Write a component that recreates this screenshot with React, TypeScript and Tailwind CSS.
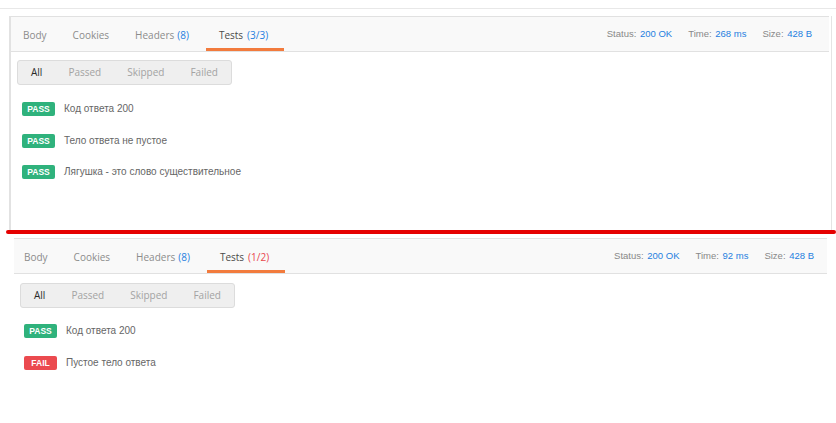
import React from 'react';

type TestResult = { passed: boolean; name: string };

interface PanelProps {
  testsCount: string;
  countFailed: boolean;
  time: string;
  results: TestResult[];
  tabsOffset: string;
  headerClass: string;
  filterClass: string;
  listClass: string;
}

const tabs = ['Body', 'Cookies', 'Headers', 'Tests'];
const filters = ['All', 'Passed', 'Skipped', 'Failed'];

const Badge = ({ passed }: { passed: boolean }) => (
  <span
    className={`w-[33px] h-[14px] shrink-0 rounded-[2px] flex items-center justify-center text-white text-[8.5px] font-semibold font-['Liberation_Sans',Arial,sans-serif] ${
      passed ? 'bg-[#2fb27c]' : 'bg-[#eb4a4f]'
    }`}
  >
    {passed ? 'PASS' : 'FAIL'}
  </span>
);

const ResultsPanel: React.FC<PanelProps> = ({
  testsCount,
  countFailed,
  time,
  results,
  tabsOffset,
  headerClass,
  filterClass,
  listClass,
}) => {
  return (
    <>
      {/* Tabs + response meta */}
      <div className={`h-[36px] flex items-stretch justify-between bg-[#f9f9f9] border-y border-[#e1e1e1] ${headerClass}`}>
        <div className={`flex items-stretch font-['Open_Sans',sans-serif] text-[10px] ${tabsOffset}`}>
          {tabs.map((t) => {
            const active = t === 'Tests';
            return (
              <div
                key={t}
                className={`flex items-center pt-[5px] border-b-[3px] ${
                  active
                    ? 'border-[#f27b3d] text-[#4a4a4a] ml-[4px] pl-[13px] pr-[16px]'
                    : 'border-transparent text-[#8c8c8c] px-[13px]'
                }`}
              >
                <span>{t}</span>
                {t === 'Headers' && <span className="ml-[3px] text-[#1f80e0]">(8)</span>}
                {active && (
                  <span className={`ml-[4px] ${countFailed ? 'text-[#e8474d]' : 'text-[#1f80e0]'}`}>
                    ({testsCount})
                  </span>
                )}
              </div>
            );
          })}
        </div>
        <div className="flex items-center gap-[16px] pt-[1px] font-['Liberation_Sans',Arial,sans-serif] text-[9.5px]">
          <span className="text-[#888]">
            Status: <span className="ml-[1px] text-[#1f80e0]">200 OK</span>
          </span>
          <span className="text-[#888]">
            Time: <span className="ml-[1px] text-[#1f80e0]">{time}</span>
          </span>
          <span className="text-[#888]">
            Size: <span className="ml-[1px] text-[#1f80e0]">428 B</span>
          </span>
        </div>
      </div>

      {/* Filter group */}
      <div
        className={`flex w-fit rounded-[3px] border border-[#dcdcdc] bg-[#efefef] font-['Open_Sans',sans-serif] text-[10px] ${filterClass}`}
      >
        {filters.map((f) => (
          <span key={f} className={`px-[13px] flex items-center ${f === 'All' ? 'text-[#2a2a2a]' : 'text-[#a3a3a3]'}`}>
            {f}
          </span>
        ))}
      </div>

      {/* Results */}
      <div className={`flex flex-col font-['Liberation_Sans',Arial,sans-serif] text-[10px] leading-[14px] text-[#666] ${listClass}`}>
        {results.map((r, i) => (
          <div key={i} className="flex items-center gap-[9px] h-[14px]">
            <Badge passed={r.passed} />
            <span>{r.name}</span>
          </div>
        ))}
      </div>
    </>
  );
};

export default function App() {
  return (
    <div className="w-[836px] h-[423px] bg-white overflow-hidden">
      <div className="pt-[8px]">
        <div className="h-px bg-[#e8e8e8]" />
      </div>
      <div className="h-[7px]" />

      {/* First screenshot: all passed */}
      <div className="ml-[9px] mr-[4px] h-[214px] border-l-2 border-l-[#e2e2e2] border-r border-r-[#e4e4e4]">
        <ResultsPanel
          testsCount="3/3"
          countFailed={false}
          time="268 ms"
          tabsOffset="-ml-[1px]"
          headerClass="mr-[2px] pr-[17px]"
          filterClass="ml-[6px] mt-[8px] h-[25px]"
          listClass="ml-[11px] mt-[17px] gap-[17.5px]"
          results={[
            { passed: true, name: 'Код ответа 200' },
            { passed: true, name: 'Тело ответа не пустое' },
            { passed: true, name: 'Лягушка - это слово существительное' },
          ]}
        />
      </div>

      {/* Divider */}
      <div className="ml-[6px] h-[4px] rounded-full bg-[#e50000]" />
      <div className="h-[4px]" />

      {/* Second screenshot: one failed */}
      <div className="ml-[14px] mr-[9px]">
        <ResultsPanel
          testsCount="1/2"
          countFailed={true}
          time="92 ms"
          tabsOffset="-ml-[3px]"
          headerClass="pr-[13px]"
          filterClass="ml-[6px] mt-[9px] h-[25px]"
          listClass="ml-[10px] mt-[16px] gap-[18px]"
          results={[
            { passed: true, name: 'Код ответа 200' },
            { passed: false, name: 'Пустое тело ответа' },
          ]}
        />
      </div>
    </div>
  );
}
